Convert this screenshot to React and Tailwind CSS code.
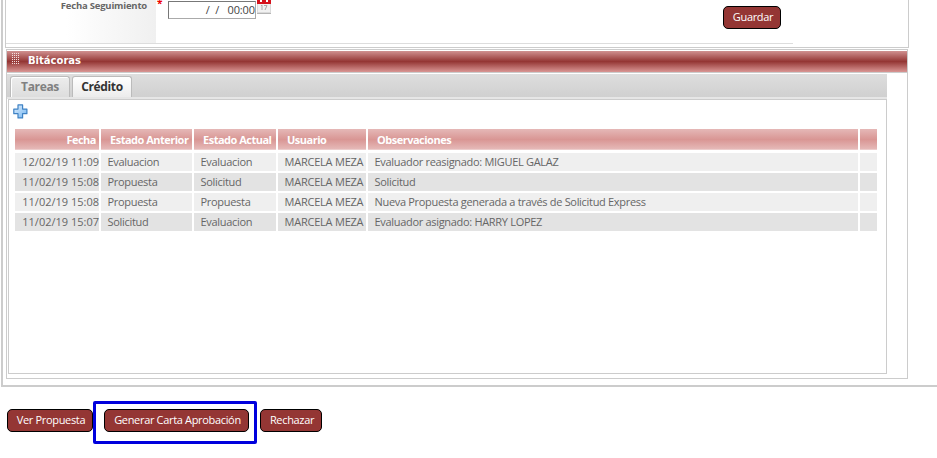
const columns = [
  { label: 'Fecha', cell: 'w-[84px]', head: 'justify-end pr-[3px]', body: 'justify-end' },
  { label: 'Estado Anterior', cell: 'w-[91px]', head: 'pl-[9px]', body: 'pl-[6.5px] tracking-[-0.3px]' },
  { label: 'Estado Actual', cell: 'w-[82px]', head: 'pl-[9px]', body: 'pl-[6.5px] tracking-[-0.3px]' },
  { label: 'Usuario', cell: 'w-[88px]', head: 'pl-[9px]', body: 'pl-[6.5px] tracking-[-0.22px]' },
  { label: 'Observaciones', cell: 'w-[490px]', head: 'pl-[9px]', body: 'pl-[6.5px] tracking-[-0.31px]' },
  { label: '', cell: 'w-[17px]', head: '', body: '' },
];

const rows = [
  ['12/02/19 11:09', 'Evaluacion', 'Evaluacion', 'MARCELA MEZA', 'Evaluador reasignado: MIGUEL GALAZ', ''],
  ['11/02/19 15:08', 'Propuesta', 'Solicitud', 'MARCELA MEZA', 'Solicitud', ''],
  ['11/02/19 15:08', 'Propuesta', 'Propuesta', 'MARCELA MEZA', 'Nueva Propuesta generada a través de Solicitud Express', ''],
  ['11/02/19 15:07', 'Solicitud', 'Evaluacion', 'MARCELA MEZA', 'Evaluador asignado: HARRY LOPEZ', ''],
];

function Button({ className, children }) {
  return (
    <button
      className={`flex h-[23px] shrink-0 items-center justify-center rounded-[5px] border border-black bg-[#943634] pb-[2px] pl-[2px] text-[11px] leading-none tracking-[-0.33px] whitespace-nowrap text-white ${className}`}
    >
      {children}
    </button>
  );
}

function Calendar() {
  return (
    <svg width="14" height="14" viewBox="0 0 14 14" shapeRendering="crispEdges">
      <rect x="0" y="0" width="14" height="13" fill="#dadada" />
      <rect x="0" y="0" width="14" height="4" fill="#d5121c" />
      <rect x="3" y="0" width="2" height="2" fill="#fff" />
      <rect x="9" y="0" width="2" height="2" fill="#fff" />
      <rect x="1" y="4" width="12" height="8" fill="#f1f1f1" />
      <path d="M0 13h14" stroke="#b5b5b5" />
      <path d="M4 6l1-1v5M7 5.5h3l-2 4.5" fill="none" stroke="#aaa" shapeRendering="auto" />
    </svg>
  );
}

function Plus() {
  return (
    <svg width="15" height="15" viewBox="0 0 15 15">
      <defs>
        <linearGradient id="plus" x1="0" y1="0" x2="1" y2="1">
          <stop offset="0" stopColor="#e3f1ff" />
          <stop offset="1" stopColor="#70b3ef" />
        </linearGradient>
      </defs>
      <path
        d="M5 .9h4.6v4.2h4.3v4.6H9.6v4.2H5V9.7H.8V5.1H5z"
        fill="url(#plus)"
        stroke="#3f82c4"
        strokeWidth="1.2"
        strokeLinejoin="round"
      />
    </svg>
  );
}

function Grip() {
  return (
    <svg width="8" height="12" viewBox="0 0 8 12" shapeRendering="crispEdges">
      {[0, 2, 4, 6, 8, 10].map((y) =>
        [0, 2, 4, 6].map((x) => <rect key={`${x}-${y}`} x={x} y={y} width="1" height="1" fill="#f3dede" />)
      )}
    </svg>
  );
}

export default function App() {
  return (
    <div className="h-[458px] w-[937px] overflow-hidden bg-white font-['Open_Sans','Noto_Sans',sans-serif] text-[11px] text-[#666]">
      <div className="ml-[1px] h-[387px] w-[940px] border-b-2 border-l-2 border-[#ccc]">
        <section className="ml-[2px] h-[48px] w-[904px] border-x border-b border-[#ccc]">
          <div className="flex h-[44px] w-[787px] items-start border-b border-[#ddd]">
            <div className="flex h-[43px] w-[150px] justify-end bg-gradient-to-r from-white from-40% to-[#f0f0f0] pr-[9px] text-[9.5px] leading-[11px] font-bold tracking-[-0.2px] whitespace-nowrap text-[#666]">
              Fecha Seguimiento
            </div>
            <span className="ml-px w-[11px] text-[10px] leading-[6px] font-bold text-[#e00]">*</span>
            <div className="mt-px flex h-[18px] w-[88px] items-center justify-end border border-[#aaa] border-t-[#777] border-l-[#777] pb-px text-[11px] leading-none tracking-[-0.1px] whitespace-pre text-[#444]">
              {'/  /   00:00'}
            </div>
            <div className="ml-px">
              <Calendar />
            </div>
            <Button className="mt-[6px] ml-auto mr-[12px] w-[58px]">Guardar</Button>
          </div>
        </section>

        <section className="mt-[1px] ml-[3px] h-[330px] w-[902px] border border-[#ccc]">
          <header className="mt-px flex h-[21px] items-start bg-[linear-gradient(to_bottom,#d09090_0%,#943634_50%,#d99694_100%)]">
            <div className="mt-[2px] ml-[5px]">
              <Grip />
            </div>
            <h2 className="ml-[8px] font-['DejaVu_Sans',Verdana,sans-serif] text-[10px] leading-[19px] font-bold text-white">
              Bitácoras
            </h2>
          </header>
          <div className="h-px bg-[#ccc]" />
          <div className="mt-px flex h-[23px] w-[880px] items-end bg-gradient-to-b from-[#dedede] to-[#d0d0d0] pl-[3px] text-[12px] font-bold tracking-[-0.35px]">
            <div className="flex h-[21px] w-[60px] items-center justify-center rounded-t-[3px] border border-b-0 border-[#bbb] bg-gradient-to-b from-[#ededed] to-[#ddd] pb-px text-[#808080] shadow-[inset_1px_1px_0_#fff]">
              Tareas
            </div>
            <div className="ml-[2px] flex h-[21px] w-[60px] items-center justify-center rounded-t-[3px] border border-b-0 border-[#bbb] bg-gradient-to-b from-white to-[#ececec] pb-px text-[#333]">
              Crédito
            </div>
          </div>
          <div className="h-[2px] w-[880px] bg-[#e6e6e6]" />
          <div className="ml-[1px] h-[275px] w-[879px] border border-[#ccc]">
            <div className="mt-[4px] ml-[4px] h-[25px]">
              <Plus />
            </div>
            <div className="ml-[6px]">
              <div className="mb-[3px] flex h-[21px] gap-[2px]">
                {columns.map((c, i) => (
                  <div
                    key={i}
                    className={`flex items-center bg-[linear-gradient(to_bottom,#e5b8b7_0%,#d99694_50%,#e5b8b7_95%,#f3dede_100%)] pt-px font-bold tracking-[-0.5px] whitespace-nowrap text-white ${c.cell} ${c.head}`}
                  >
                    {c.label}
                  </div>
                ))}
              </div>
              <div className="flex flex-col gap-[2px]">
                {rows.map((row, r) => (
                  <div key={r} className="flex h-[18px] gap-[2px]">
                    {row.map((value, i) => (
                      <div
                        key={i}
                        className={`flex items-center whitespace-nowrap ${columns[i].cell} ${columns[i].body} ${r % 2 ? 'bg-[#e3e3e3]' : 'bg-[#efefef]'}`}
                      >
                        {value}
                      </div>
                    ))}
                  </div>
                ))}
              </div>
            </div>
          </div>
        </section>
      </div>

      <div className="relative mt-[22px] flex pl-[7px]">
        <Button className="w-[86px]">Ver Propuesta</Button>
        <Button className="ml-[11px] w-[145px]">Generar Carta Aprobación</Button>
        <Button className="ml-[11px] w-[62px]">Rechazar</Button>
        <div className="absolute -top-[8px] left-[93px] h-[43px] w-[164px] rounded-[2px] border-[3px] border-[#0000dd]" />
      </div>
    </div>
  );
}
